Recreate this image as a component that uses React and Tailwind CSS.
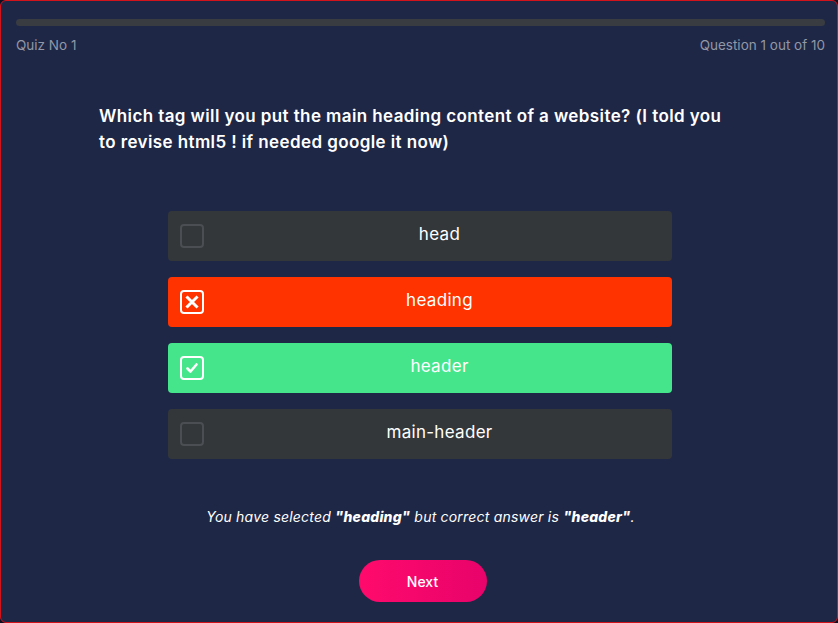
const OPCIONES = [
  { texto: 'head', estado: 'idle' },
  { texto: 'heading', estado: 'wrong' },
  { texto: 'header', estado: 'right' },
  { texto: 'main-header', estado: 'idle' },
]

const FONDO = {
  idle: 'bg-[#343739]',
  wrong: 'bg-[#ff3300]',
  right: 'bg-[#45e68b]',
}

function Casilla({ estado }) {
  if (estado === 'idle') {
    return <span className="shrink-0 h-6 w-6 rounded-[4px] border-2 border-[#4b4e52]" />
  }
  return (
    <span className="shrink-0 h-6 w-6 rounded-[4px] border-2 border-white flex items-center justify-center">
      {estado === 'wrong' ? (
        <svg viewBox="0 0 16 16" className="h-4 w-4" fill="none" stroke="white" strokeWidth="3" strokeLinecap="square">
          <path d="M3.5 3.5l9 9M12.5 3.5l-9 9" />
        </svg>
      ) : (
        <svg viewBox="0 0 16 16" className="h-4 w-4" fill="none" stroke="white" strokeWidth="2.6" strokeLinecap="round" strokeLinejoin="round">
          <path d="M3.5 8.5l3 3 6-7" />
        </svg>
      )}
    </span>
  )
}

export default function App() {
  return (
    <div className="w-[838px] h-[623px] bg-[#0d1020] font-['Inter',sans-serif]">
      <div className="h-full w-full rounded-[6px] border border-[#d3131c] bg-[#1f2746] flex flex-col pl-[15px] pr-[12px] pt-[18px]">
        <div className="h-[7px] rounded-full bg-[#393c40]" />
        <div className="mt-[9px] flex justify-between text-[13.5px] leading-[20px] text-[#9197a6]">
          <span>Quiz No 1</span>
          <span>Question 1 out of 10</span>
        </div>

        <p className="mt-[48px] ml-[83px] w-[640px] text-[17px] leading-[26px] font-semibold text-white tracking-[0.4px]">
          Which tag will you put the main heading content of a website? (I told you to revise html5 ! if needed google it now)
        </p>

        <div className="mt-[56px] pr-[2px] flex justify-center">
          <div className="w-[504px] flex flex-col gap-[16px]">
            {OPCIONES.map(({ texto, estado }) => (
              <div key={texto} className={`h-[50px] rounded-[4px] ${FONDO[estado]} flex items-center pl-[12px]`}>
                <Casilla estado={estado} />
                <span className="flex-1 text-center text-[17px] tracking-[0.3px] text-white pb-[2px] pl-[4px]">
                  {texto}
                </span>
              </div>
            ))}
          </div>
        </div>

        <p className="mt-[48px] text-center text-[14px] leading-[20px] italic text-white tracking-[0.2px]">
          You have selected <b className="font-extrabold">"heading"</b> but correct answer is <b className="font-extrabold">"header"</b>.
        </p>

        <div className="mt-[33px] pl-[4px] flex justify-center">
          <button className="w-[128px] h-[42px] rounded-full bg-gradient-to-r from-[#ff0a6c] to-[#e8036a] text-white text-[14px] font-medium">
            Next
          </button>
        </div>
      </div>
    </div>
  )
}
